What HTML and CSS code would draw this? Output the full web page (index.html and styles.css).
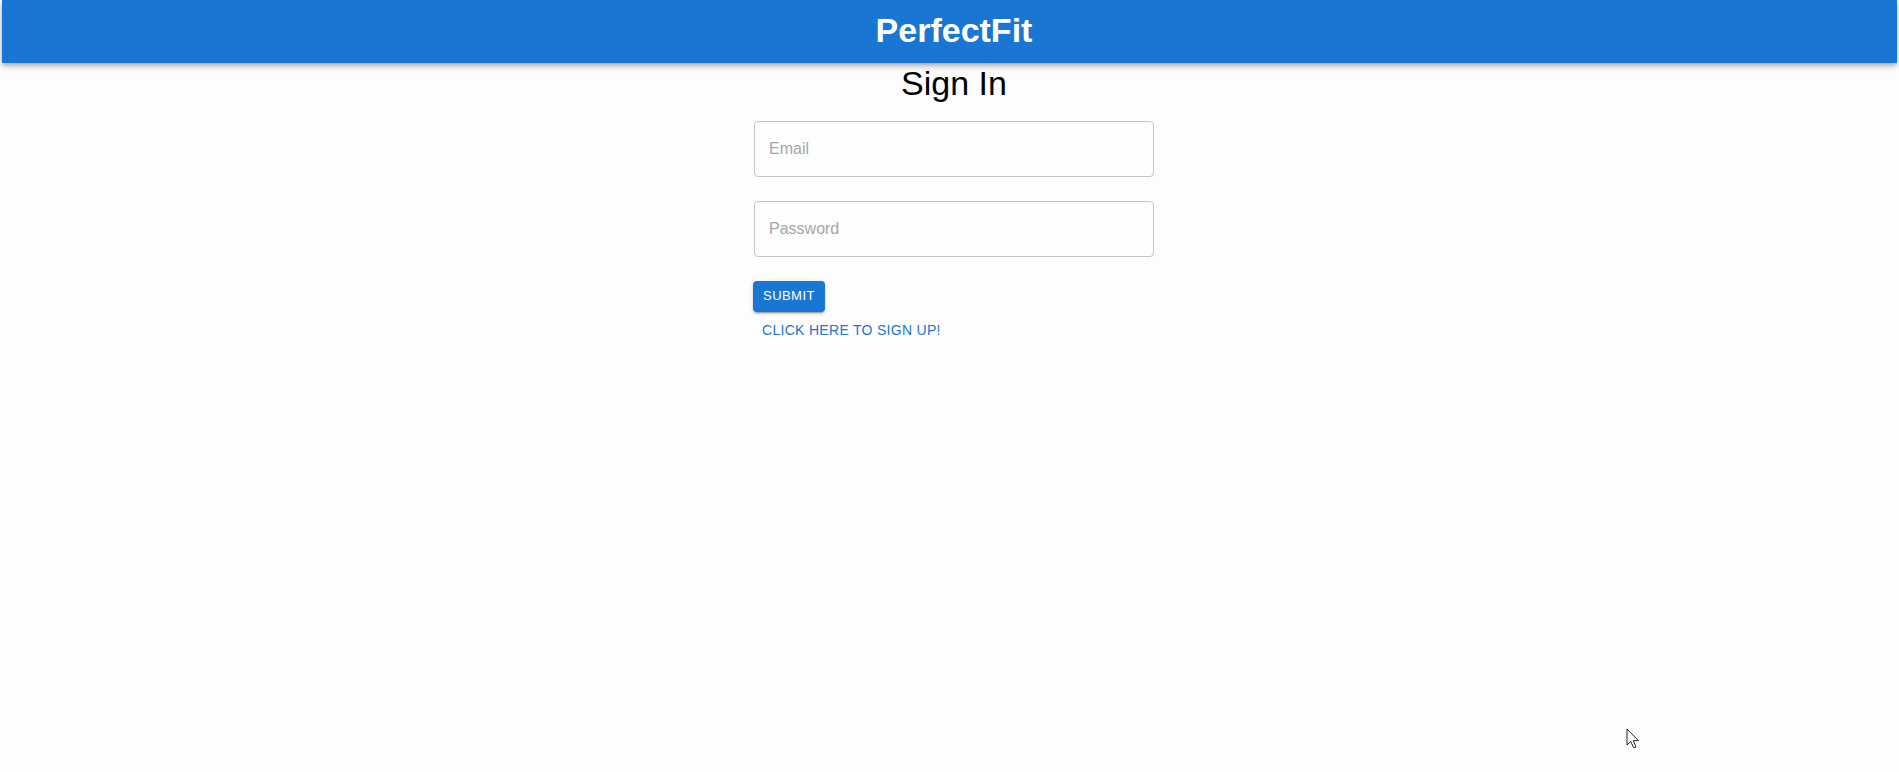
FILE: index.html
```html
<!DOCTYPE html>
<html lang="en">
<head>
<meta charset="utf-8">
<title>PerfectFit - Sign In</title>
<link rel="stylesheet" href="styles.css">
</head>
<body>
<div class="app">
  <header class="appbar">
    <div class="toolbar">
      <h1 class="brand">PerfectFit</h1>
    </div>
  </header>
  <main class="main">
    <form class="signin" onsubmit="return false;">
      <h2 class="title">Sign In</h2>
      <div class="field">
        <input class="input" type="email" placeholder="Email">
      </div>
      <div class="field">
        <input class="input" type="password" placeholder="Password">
      </div>
      <div class="actions">
        <button class="btn-contained" type="submit">Submit</button>
        <a class="btn-text" href="#">Click here to sign up!</a>
      </div>
    </form>
  </main>
  <svg class="cursor" width="14" height="22" viewBox="0 0 14 22" aria-hidden="true">
    <path d="M1 1 L1 17 L4.8 13.4 L7.6 19.8 L10 18.8 L7.3 12.6 L12.4 12.6 Z" fill="#fff" stroke="#222" stroke-width="1" stroke-linejoin="miter"/>
  </svg>
</div>
</body>
</html>
```

FILE: styles.css
```css
* {
  box-sizing: border-box;
}

html, body {
  margin: 0;
  padding: 0;
  background: #fdfdfd;
  font-family: "Liberation Sans", Arial, sans-serif;
}

.app {
  margin: 0 2px;
  min-height: 772px;
}

.appbar {
  background: #1976d2;
  color: #fff;
  box-shadow: 0 2px 4px -1px rgba(0,0,0,0.2), 0 4px 5px 0 rgba(0,0,0,0.14), 0 1px 10px 0 rgba(0,0,0,0.12);
  position: relative;
  z-index: 1;
}

.toolbar {
  height: 63px;
  display: flex;
  align-items: center;
  justify-content: center;
  padding: 0 24px 2px 33px;
}

.brand {
  margin: 0;
  font-size: 34px;
  font-weight: 700;
  line-height: normal;
}

.main {
  padding-left: 9px;
}

.signin {
  width: 400px;
  margin: 0 auto;
  display: flex;
  flex-direction: column;
}

.title {
  margin: -1px 0 1px;
  font-size: 34px;
  font-weight: 400;
  line-height: 42px;
  text-align: center;
  color: #000;
}

.field {
  margin-top: 16px;
  margin-bottom: 8px;
}

.input {
  display: block;
  width: 100%;
  height: 56px;
  padding: 16.5px 14px;
  border: 1px solid #c4c4c4;
  border-radius: 4px;
  background: transparent;
  font-family: "Liberation Sans", Arial, sans-serif;
  font-size: 16px;
  color: #222;
  outline: none;
}

.input::placeholder {
  color: #a6a6a6;
  opacity: 1;
}

.actions {
  margin-top: 16px;
  display: flex;
  flex-direction: column;
  align-items: flex-start;
}

.btn-contained {
  font-family: "Liberation Sans", Arial, sans-serif;
  font-size: 13px;
  font-weight: 500;
  line-height: 22.75px;
  letter-spacing: 0.46px;
  text-transform: uppercase;
  color: #fff;
  background: #1976d2;
  border: 0;
  border-radius: 4px;
  padding: 4px 10px;
  margin-left: -1px;
  box-shadow: 0 3px 1px -2px rgba(0,0,0,0.2), 0 2px 2px 0 rgba(0,0,0,0.14), 0 1px 5px 0 rgba(0,0,0,0.12);
  cursor: pointer;
}

.btn-text {
  font-size: 14px;
  font-weight: 500;
  line-height: 24.5px;
  letter-spacing: 0.3px;
  text-transform: uppercase;
  color: #1976d2;
  text-decoration: none;
  padding: 6px 8px;
  margin-left: 0;
  border-radius: 4px;
}

.cursor {
  position: absolute;
  left: 1626px;
  top: 728px;
}
```
